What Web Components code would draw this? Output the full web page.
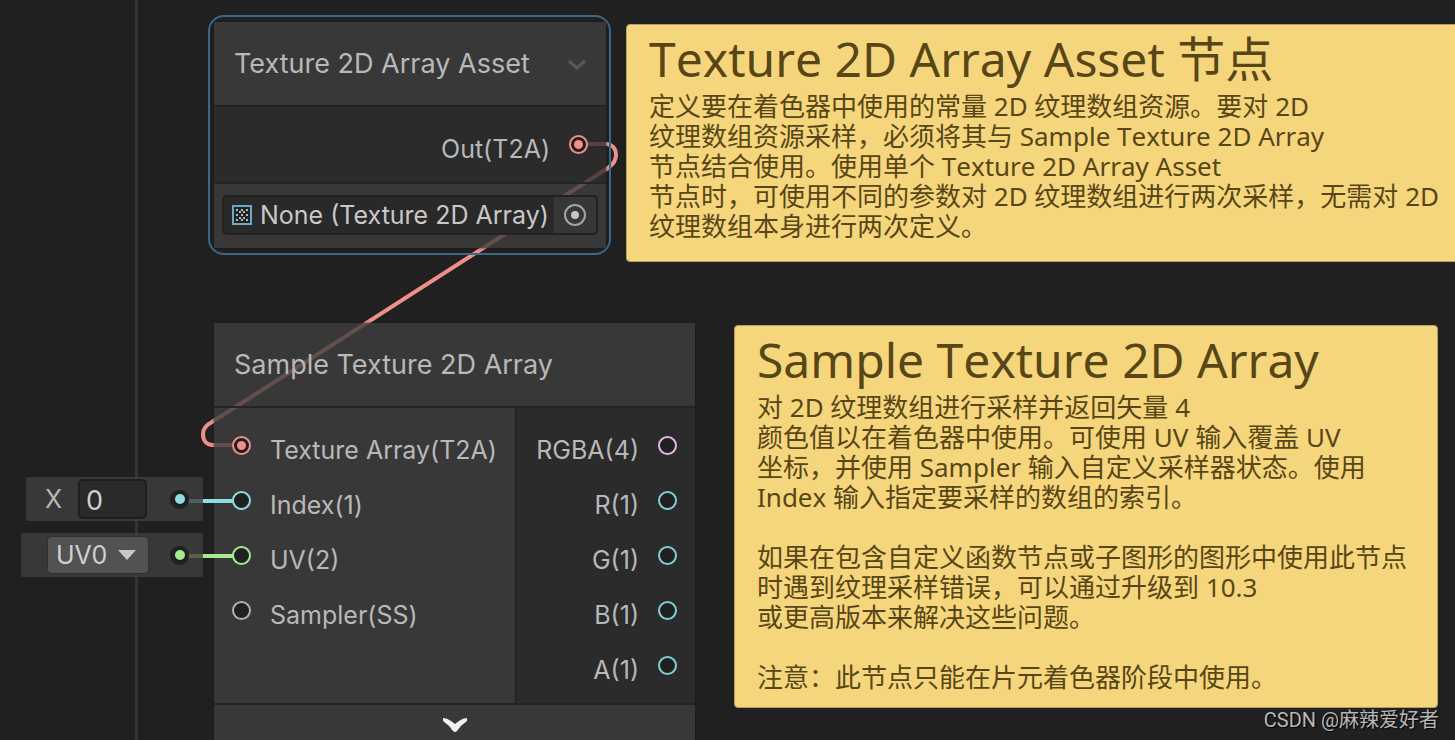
<!DOCTYPE html>
<html lang="zh-CN">
<head>
<meta charset="utf-8">
<meta name="viewport" content="width=device-width, initial-scale=1">
<title>Shader Graph</title>
<style>
  html, body { margin: 0; height: 100%; background: #202020; }
  body { font-family: Inter, "Noto Sans CJK SC", sans-serif; color: #b8b8b8; overflow: hidden; }
  /* Places of the items on the free canvas */
  #asset { left: 208px; top: 15px; width: 403px; }
  #sample { left: 214px; top: 323px; width: 481px; }
  #index-value { left: 26px; top: 477px; width: 177px; }
  #uv-value { left: 21px; top: 533px; width: 182px; }
  #asset-note { left: 626px; top: 24px; width: 860px; min-height: 238px; }
  #sample-note { left: 734px; top: 325px; width: 704px; min-height: 383px; }
</style>
</head>
<body>

<graph-canvas>
  <graph-edges slot="edges"></graph-edges>

  <graph-node id="asset" selected heading="Texture 2D Array Asset">
    <graph-port slot="outputs" side="out" color="#ee8f8b" connected>Out(T2A)</graph-port>
    <object-field slot="controls">None (Texture 2D Array)</object-field>
  </graph-node>

  <graph-node id="sample" heading="Sample Texture 2D Array">
    <graph-port slot="inputs" color="#ee8f8b" connected>Texture Array(T2A)</graph-port>
    <graph-port slot="inputs" color="#8fdde2" stub>Index(1)</graph-port>
    <graph-port slot="inputs" color="#a5ea91" stub>UV(2)</graph-port>
    <graph-port slot="inputs" color="#b0b0b0">Sampler(SS)</graph-port>
    <graph-port slot="outputs" side="out" color="#e3b6e6">RGBA(4)</graph-port>
    <graph-port slot="outputs" side="out" color="#80cfd4">R(1)</graph-port>
    <graph-port slot="outputs" side="out" color="#80cfd4">G(1)</graph-port>
    <graph-port slot="outputs" side="out" color="#80cfd4">B(1)</graph-port>
    <graph-port slot="outputs" side="out" color="#80cfd4">A(1)</graph-port>
  </graph-node>

  <port-value id="index-value" kind="number" color="#8fdde2"></port-value>
  <port-value id="uv-value" kind="channel" color="#a5ea91"></port-value>

  <sticky-note id="asset-note">
    <span slot="title">Texture 2D Array Asset 节点</span>
    定义要在着色器中使用的常量 2D 纹理数组资源。要对 2D<br>纹理数组资源采样，必须将其与 Sample Texture 2D Array<br>节点结合使用。使用单个 Texture 2D Array Asset<br>节点时，可使用不同的参数对 2D 纹理数组进行两次采样，无需对 2D<br>纹理数组本身进行两次定义。
  </sticky-note>

  <sticky-note id="sample-note">
    <span slot="title">Sample Texture 2D Array</span>
    对 2D 纹理数组进行采样并返回矢量 4<br>颜色值以在着色器中使用。可使用 UV 输入覆盖 UV<br>坐标，并使用 Sampler 输入自定义采样器状态。使用<br>Index 输入指定要采样的数组的索引。<br><br>如果在包含自定义函数节点或子图形的图形中使用此节点<br>时遇到纹理采样错误，可以通过升级到 10.3<br>或更高版本来解决这些问题。<br><br>注意：此节点只能在片元着色器阶段中使用。
  </sticky-note>

  <author-mark slot="mark">CSDN @麻辣爱好者</author-mark>
</graph-canvas>

<script>
  const define = (name, html, setup) => {
    const template = document.createElement('template');
    template.innerHTML = html;
    customElements.define(name, class extends HTMLElement {
      constructor() {
        super();
        this.attachShadow({ mode: 'open' }).append(template.content.cloneNode(true));
      }
      connectedCallback() {
        if (setup) setup(this, this.shadowRoot);
      }
    });
  };

  define('graph-canvas', `
    <style>
      :host {
        display: block; position: relative; height: 100vh; overflow: hidden;
        background: linear-gradient(#343434, #343434) 135px 0 / 3px 100% no-repeat #202020;
      }
      ::slotted(*) { position: absolute; }
      ::slotted([slot="edges"]) { inset: 0; }
      ::slotted([slot="mark"]) { right: 16px; bottom: 6px; }
    </style>
    <slot name="edges"></slot>
    <slot></slot>
    <slot name="mark"></slot>`);

  define('graph-edges', `
    <style>
      :host { display: block; }
      svg { display: block; width: 100%; height: 100%; }
      path { fill: none; stroke-width: 4; }
    </style>
    <svg aria-hidden="true">
      <path stroke="#ee8f8b" d="M577 144H607C613 145 616 149 616 155C616 161 613 164 608 168L212 422C206 425 203 429 203 434C203 440 206 445 213 445H242"/>
      <path stroke="#8fdde2" d="M180 501H205"/>
      <path stroke="#a5ea91" d="M180 556H205"/>
    </svg>`);

  define('graph-node', `
    <style>
      :host { display: block; box-sizing: border-box; --pane: rgba(63, 63, 63, .8); --dark: rgba(46, 46, 46, .8); --rule: #242424; }
      :host([selected]) { border: 2px solid #3b6886; border-radius: 16px; padding: 5px 3px 5px 4px; }
      article { border-radius: 2px; box-shadow: 0 0 2px #141414; }
      header {
        display: flex; align-items: center; justify-content: space-between;
        box-sizing: border-box; height: 83px; padding: 0 20px;
        background: var(--pane);
      }
      h2 { margin: 0; font-size: 27px; line-height: 36px; font-weight: 400; white-space: nowrap; }
      button { display: flex; padding: 0; border: 0; background: none; color: inherit; cursor: pointer; }
      .ports { display: flex; border-top: 2px solid var(--rule); }
      .in, .out { box-sizing: border-box; padding: 10px 18px; }
      .in { flex: 1; background: var(--pane); border-right: 2px solid var(--rule); }
      .out { flex: none; width: 178px; background: var(--dark); }
      :host([selected]) .out { flex: 1; }
      .controls { border-top: 2px solid var(--rule); padding: 11px 8px 13px; background: var(--pane); }
      .more { box-sizing: border-box; width: 100%; height: 42px; align-items: center; justify-content: center; border-top: 2px solid var(--rule); background: var(--pane); color: #f0f0f0; }
      .fold { color: #585858; }
      :host([selected]) .in, :host([selected]) .more,
      :host(:not([selected])) .controls, :host(:not([selected])) .fold { display: none; }
      :host(:not([selected])) .ports { min-height: 295px; }
    </style>
    <article>
      <header>
        <h2></h2>
        <button class="fold" type="button" aria-label="Collapse">
          <svg width="18" height="12" fill="none" stroke="currentColor" stroke-width="3"><path d="M1 3L9 10L17 3"/></svg>
        </button>
      </header>
      <div class="ports">
        <div class="in"><slot name="inputs"></slot></div>
        <div class="out"><slot name="outputs"></slot></div>
      </div>
      <div class="controls"><slot name="controls"></slot></div>
      <button class="more" type="button" aria-label="Expand preview">
        <svg width="28" height="18" fill="currentColor"><path d="M2 2Q6 2 10 5L14 8L18 5Q22 2 26 2V5Q20 9 16 15Q14 17 12 15Q8 9 2 5Z"/></svg>
      </button>
    </article>`, (host, root) => {
      root.querySelector('h2').textContent = host.getAttribute('heading');
    });

  define('graph-port', `
    <style>
      :host { display: flex; align-items: center; gap: 19px; height: 55px; font-size: 25px; line-height: 32px; white-space: nowrap; }
      :host([side="out"]) { flex-direction: row-reverse; }
      .label { padding-top: 8px; }
      .pin {
        flex: none; position: relative; box-sizing: border-box; width: 19px; height: 19px;
        display: flex; align-items: center; justify-content: center;
        border: 2px solid var(--c); border-radius: 50%; background: #202020;
      }
      :host([connected]) .pin::after { content: ""; width: 9px; height: 9px; border-radius: 50%; background: var(--c); }
      /* Lead that joins the pin to the value box beside the node */
      :host([stub]) .pin::before { content: ""; position: absolute; right: 100%; width: 29px; height: 4px; background: var(--c); }
    </style>
    <span class="pin"></span>
    <span class="label"><slot></slot></span>`, (host) => {
      host.style.setProperty('--c', host.getAttribute('color'));
    });

  define('object-field', `
    <style>
      :host {
        display: flex; align-items: center; box-sizing: border-box; height: 40px;
        border: 2px solid #212121; border-radius: 5px; background: #292929; color: #c8c8c8;
        font-size: 25px; line-height: 32px; white-space: nowrap;
      }
      .icon { flex: none; margin: 0 8px; }
      .value { flex: 1; }
      button { display: flex; align-items: center; justify-content: center; align-self: stretch; width: 42px; padding: 0; border: 0; background: #373737; border-radius: 0 3px 3px 0; }
    </style>
    <svg class="icon" width="20" height="20" aria-hidden="true">
      <rect x="1" y="1" width="18" height="18" fill="#1f2427" stroke="#6fa8c6" stroke-width="2"/>
      <path fill="#b8b8b8" d="M4 4h2v2H4zM14 4h2v2h-2zM9 4h2v2H9zM7 6h2v2H7zM11 6h2v2h-2zM4 9h2v2H4zM9 9h2v2H9zM14 9h2v2h-2zM7 12h2v2H7zM11 12h2v2h-2zM4 14h2v2H4zM9 14h2v2H9zM14 14h2v2h-2z"/>
    </svg>
    <span class="value"><slot></slot></span>
    <button type="button" aria-label="Select texture array">
      <svg width="24" height="24"><circle cx="12" cy="12" r="10" fill="none" stroke="#a4a4a4" stroke-width="2"/><circle cx="12" cy="12" r="4" fill="#c4c4c4"/></svg>
    </button>`);

  define('port-value', `
    <style>
      :host {
        display: flex; align-items: center; justify-content: flex-end; box-sizing: border-box;
        height: 44px; padding-right: 14px; border-radius: 2px; background: rgba(63, 63, 63, .8);
        font-size: 25px; line-height: 32px;
      }
      label { margin-right: 16px; }
      input, select {
        box-sizing: border-box; margin: 0; border-radius: 5px; outline: 0;
        font: inherit; color: #d0d0d0; appearance: none;
      }
      input { width: 69px; height: 40px; padding: 2px 6px 0; border: 2px solid #1e1e1e; background: #2a2a2a; margin-right: 23px; font-size: 27px; }
      .pick { display: grid; align-items: center; margin-right: 21px; }
      .pick > * { grid-area: 1 / 1; }
      select { width: 102px; height: 38px; padding: 0 8px; border: 1px solid #303030; background: #525252; }
      .pick svg { justify-self: end; margin-right: 13px; pointer-events: none; }
      .pin { flex: none; width: 19px; height: 19px; display: flex; align-items: center; justify-content: center; border-radius: 50%; background: #202020; }
      .pin::after { content: ""; width: 10px; height: 10px; border-radius: 50%; background: var(--c); }
    </style>
    <label for="x">X</label>
    <input id="x" type="text" inputmode="decimal" value="0">
    <span class="pick">
      <select aria-label="UV channel"><option>UV0</option><option>UV1</option><option>UV2</option><option>UV3</option></select>
      <svg width="18" height="10" aria-hidden="true"><path d="M0 0H18L9 10Z" fill="#c8c8c8"/></svg>
    </span>
    <span class="pin"></span>`, (host, root) => {
      host.style.setProperty('--c', host.getAttribute('color'));
      const unused = host.getAttribute('kind') === 'number' ? '.pick' : 'label, input';
      root.querySelectorAll(unused).forEach((part) => part.remove());
    });

  define('sticky-note', `
    <style>
      :host {
        display: block; box-sizing: border-box; padding: 6px 0 0 22px;
        border: 1px solid #b89f60; border-radius: 4px; background: #f5d67d; color: #584616;
        font-family: "Noto Sans", "Noto Sans CJK SC", sans-serif; font-kerning: none; white-space: nowrap;
      }
      h2 { margin: 0 0 4px; font-size: 48px; line-height: 56px; font-weight: 400; }
      p { margin: 0; font-size: 26px; line-height: 30px; }
    </style>
    <h2><slot name="title"></slot></h2>
    <p><slot></slot></p>`);

  define('author-mark', `
    <style>
      :host { display: block; font-family: Roboto, "Noto Sans CJK SC", sans-serif; font-size: 20px; line-height: 28px; color: #b8b8b8; text-shadow: 1px 1px 1px #000; white-space: nowrap; }
    </style>
    <slot></slot>`);
</script>
</body>
</html>
